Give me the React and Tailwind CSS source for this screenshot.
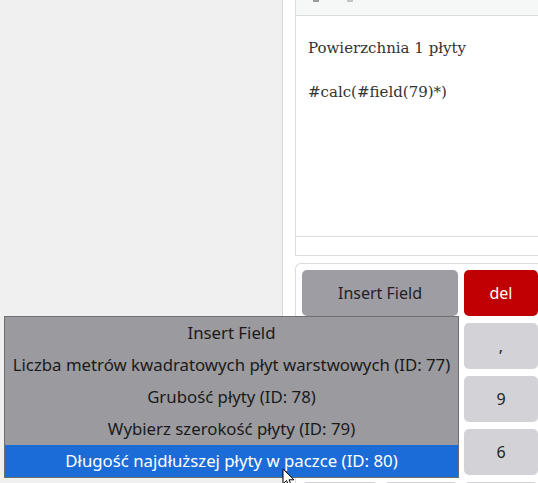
import React from "react";

const options = [
  "Insert Field",
  "Liczba metrów kwadratowych płyt warstwowych (ID: 77)",
  "Grubość płyty (ID: 78)",
  "Wybierz szerokość płyty (ID: 79)",
  "Długość najdłuższej płyty w paczce (ID: 80)",
];

// keys under the open list (and below the fold) show no label in the shot
const keys = ["", "", ",", "", "", "9", "", "", "6", "", "", ""];

function Cursor() {
  return (
    <svg
      className="absolute left-[282px] top-[468px]"
      width="14"
      height="20"
      viewBox="0 0 14 20"
    >
      <path
        d="M1 1 L1 16 L4.5 12.5 L7 18.5 L9.5 17.5 L7 11.8 L12 11.8 Z"
        fill="#ffffff"
        stroke="#000000"
        strokeWidth="1"
        strokeLinejoin="round"
      />
    </svg>
  );
}

export default function App() {
  const sans = { fontFamily: '"Noto Sans", "Open Sans", sans-serif' };

  return (
    <div className="relative w-[538px] h-[483px] overflow-hidden flex bg-white">
      {/* left side */}
      <div className="w-[283px] h-full bg-[#f0f0f0] border-r border-[#d6d6d6]"></div>

      {/* right side */}
      <div className="flex-1 pl-[12px] flex flex-col">
        <div className="shrink-0 border border-r-0 border-t-0 border-[#dcdcdc] flex flex-col h-[256px]">
          <div className="h-[16px] bg-[#f6f7f7] border-b border-[#dcdcdc] flex items-start gap-[28px] pl-[17px]">
            <span className="w-[6px] h-[2px] bg-[#9a9a9a]"></span>
            <span className="w-[6px] h-[2px] bg-[#c4c4c4]"></span>
          </div>
          <div
            className="flex-1 pl-[12px] pt-[20px] text-[15px] leading-[24px] text-[#333]"
            style={{ fontFamily: '"DejaVu Serif", "Liberation Serif", serif' }}
          >
            <p className="mb-[20px]">Powierzchnia 1 płyty</p>
            <p>#calc(#field(79)*)</p>
          </div>
          <div className="h-[19px] border-t border-[#dcdcdc]"></div>
        </div>

        <div className="mt-[7px] flex-1 border-l border-t border-[#dcdcdc] rounded-tl-[6px] pl-[6px] pt-[6px]">
          <div
            className="grid grid-cols-[76px_74px_74px] auto-rows-[46px] gap-x-[6px] gap-y-[7px] text-[16px] text-[#222]"
            style={sans}
          >
            <button className="col-span-2 rounded-[5px] bg-[#9e9da3] flex items-center justify-center">
              Insert Field
            </button>
            <button className="rounded-[5px] bg-[#c00000] text-white flex items-center justify-center">
              del
            </button>
            {keys.map((k, i) => (
              <button
                key={i}
                className="rounded-[5px] bg-[#d3d2d7] flex items-center justify-center"
              >
                {k}
              </button>
            ))}
          </div>
        </div>
      </div>

      {/* open select list */}
      <div
        className="absolute left-[4px] top-[316px] w-[455px] border border-[#6f6f73] bg-[#9b9a9f] text-[16.8px] text-[#1a1a1a]"
        style={sans}
      >
        {options.map((o, i) => (
          <div
            key={o}
            className={
              "h-[32px] flex items-center justify-center whitespace-nowrap " +
              (i === 4 ? "bg-[#1b6cd6] text-white" : "")
            }
          >
            {o}
          </div>
        ))}
      </div>

      <Cursor />
    </div>
  );
}
